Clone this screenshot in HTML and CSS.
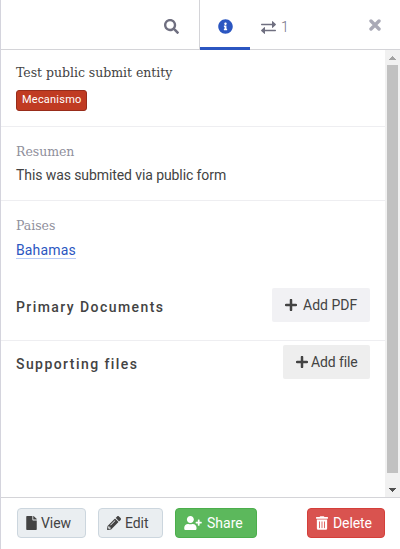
FILE: index.html
```html
<!DOCTYPE html>
<html lang="es">
<head>
<meta charset="utf-8">
<title>Entity</title>
<link rel="stylesheet" href="styles.css">
</head>
<body>
<aside class="panel">
  <header class="tabs">
    <div class="tab tab-search"><svg class="i15" viewBox="0 0 512 512"><path d="M505 442.700L405.300 343c-4.500-4.500-10.600-7-17-7H372c27.600-35.300 44-79.700 44-128C416 93.100 322.900 0 208 0S0 93.100 0 208s93.100 208 208 208c48.300 0 92.700-16.400 128-44v16.300c0 6.400 2.500 12.500 7 17l99.700 99.700c9.400 9.400 24.600 9.400 33.900 0l28.300-28.300c9.400-9.400 9.400-24.600.1-34zM208 336c-70.700 0-128-57.200-128-128 0-70.700 57.200-128 128-128 70.700 0 128 57.200 128 128 0 70.700-57.200 128-128 128z"/></svg></div>
    <div class="tab tab-info"><svg class="i15" viewBox="0 0 512 512"><path d="M256 8C119 8 8 119.100 8 256c0 137 111 248 248 248s248-111 248-248C504 119.100 393 8 256 8zm0 110c23.200 0 42 18.800 42 42s-18.800 42-42 42-42-18.800-42-42 18.800-42 42-42zm56 254c0 6.600-5.400 12-12 12h-88c-6.600 0-12-5.400-12-12v-24c0-6.600 5.400-12 12-12h12v-64h-12c-6.600 0-12-5.400-12-12v-24c0-6.600 5.400-12 12-12h64c6.600 0 12 5.400 12 12v100h12c6.600 0 12 5.400 12 12v24z"/></svg></div>
    <div class="tab tab-rel"><svg class="i15" viewBox="0 0 15 15"><path d="M.6 3.800H11V1.600q0-.8.7-.3l3 2.700q.5.500 0 1l-3 2.700q-.7.500-.7-.3V5.300H.6Q0 5.300 0 4.550T.6 3.800zM14.400 9.800H4V7.600q0-.8-.7-.3l-3 2.700q-.5.500 0 1l3 2.700q.7.500.7-.3v-2.100h10.400q.6 0 .6-.75t-.6-.75z"/></svg><span>1</span></div>
    <div class="close"><svg viewBox="0 0 12 12"><path d="M2 2l8 8M10 2L2 10"/></svg></div>
  </header>
  <div class="middle">
    <main class="content">
      <section class="block head">
        <h1>Test public submit entity</h1>
        <span class="badge">Mecanismo</span>
      </section>
      <dl class="block resumen"><dt>Resumen</dt><dd>This was submited via public form</dd></dl>
      <dl class="block paises"><dt>Paises</dt><dd><a>Bahamas</a></dd></dl>
      <section class="files primary"><h2>Primary Documents</h2>
        <button class="add pdf"><svg viewBox="0 0 12 12"><path d="M6 1v10M1 6h10"/></svg><span>Add PDF</span></button></section>
      <section class="files supporting"><h2>Supporting files</h2>
        <button class="add"><svg viewBox="0 0 12 12"><path d="M6 1v10M1 6h10"/></svg><span>Add file</span></button></section>
    </main>
    <div class="scroll">
      <svg class="arrow up" viewBox="0 0 7 4"><path d="M3 0h1v1h1v1h1v1h1v1H0V3h1V2h1V1h1z"/></svg>
      <div class="thumb"></div>
      <svg class="arrow down" viewBox="0 0 7 4"><path d="M0 0h7v1H6v1H5v1H4v1H3V3H2V2H1V1H0z"/></svg>
    </div>
  </div>
  <footer class="actions">
    <button class="btn view"><svg viewBox="0 0 384 512"><path d="M224 136V0H24C10.700 0 0 10.700 0 24v464c0 13.300 10.700 24 24 24h336c13.300 0 24-10.700 24-24V160H248c-13.200 0-24-10.800-24-24zm160-14.100v6.100H256V0h6.100c6.400 0 12.500 2.500 17 7l97.900 98c4.500 4.500 7 10.600 7 16.900z"/></svg><span>View</span></button>
    <button class="btn edit"><svg viewBox="0 0 512 512"><path d="M497.900 142.100l-46.100 46.100c-4.700 4.700-12.300 4.700-17 0l-111-111c-4.700-4.700-4.700-12.300 0-17l46.100-46.100c18.700-18.700 49.100-18.700 67.900 0l60.100 60.100c18.800 18.700 18.800 49.100 0 67.900zM284.200 99.800L21.600 362.400.4 483.900c-2.900 16.400 11.400 30.600 27.800 27.800l121.500-21.300 262.600-262.600c4.700-4.700 4.700-12.300 0-17l-111-111c-4.800-4.700-12.400-4.700-17.100 0zM124.100 339.900c-5.500-5.500-5.500-14.300 0-19.800l154-154c5.500-5.500 14.300-5.500 19.800 0s5.500 14.300 0 19.800l-154 154c-5.500 5.500-14.300 5.500-19.800 0zM88 424h48v36.300l-64.500 11.300-31.100-31.100L51.700 376H88v48z"/></svg><span>Edit</span></button>
    <button class="btn share"><svg viewBox="0 0 640 512"><path d="M624 208h-64v-64c0-8.800-7.200-16-16-16h-32c-8.800 0-16 7.200-16 16v64h-64c-8.800 0-16 7.200-16 16v32c0 8.800 7.200 16 16 16h64v64c0 8.800 7.200 16 16 16h32c8.800 0 16-7.200 16-16v-64h64c8.800 0 16-7.200 16-16v-32c0-8.800-7.200-16-16-16zM224 256c70.700 0 128-57.300 128-128S294.700 0 224 0 96 57.300 96 128s57.300 128 128 128zm89.600 32h-16.700c-22.200 10.200-46.900 16-72.900 16s-50.600-5.800-72.900-16h-16.700C60.200 288 0 348.200 0 422.400V464c0 26.500 21.500 48 48 48h352c26.500 0 48-21.500 48-48v-41.600c0-74.200-60.200-134.400-134.400-134.400z"/></svg><span>Share</span></button>
    <button class="btn delete"><svg viewBox="0 0 448 512"><path d="M32 464a48 48 0 0 0 48 48h288a48 48 0 0 0 48-48V128H32zm272-256a16 16 0 0 1 32 0v224a16 16 0 0 1-32 0zm-96 0a16 16 0 0 1 32 0v224a16 16 0 0 1-32 0zm-96 0a16 16 0 0 1 32 0v224a16 16 0 0 1-32 0zM432 32H312l-9.400-18.700A24 24 0 0 0 281.100 0H166.800a23.700 23.700 0 0 0-21.400 13.300L136 32H16A16 16 0 0 0 0 48v32a16 16 0 0 0 16 16h416a16 16 0 0 0 16-16V48a16 16 0 0 0-16-16z"/></svg><span>Delete</span></button>
  </footer>
</aside>
</body>
</html>
```
FILE: styles.css
```css
* { box-sizing: border-box; }
body { margin: 0; background: #fff; color: #434343; font: 14px/21px Roboto, sans-serif; }
h1, h2, dl, dt, dd { margin: 0; font-weight: 400; }
svg { display: block; fill: currentColor; flex: none; }
button { font: inherit; color: inherit; margin: 0; }
.panel { display: flex; flex-direction: column; height: 549px; border-left: 1px solid #d4d4dd; overflow: hidden; }

.tabs { display: flex; height: 50px; border-bottom: 1px solid #d4d4d8; color: #6f6f80; }
.tab { display: flex; align-items: center; height: 50px; padding-top: 3px; }
.i15 { width: 15px; height: 15px; }
.tab-search { width: 199px; padding-left: 163px; border-right: 1px solid #d4d4d8; }
.tab-info { width: 50px; justify-content: center; color: #2b56c1; border-bottom: 3px solid #2b56c1; padding-top: 6px; }
.tab-rel { padding-left: 11px; gap: 5px; padding-top: 4px; }
.tab-rel span { font-weight: 300; }
.close { margin: 19px 19px 0 auto; }
.close svg { width: 12px; height: 12px; fill: none; stroke: #a9a9b6; stroke-width: 3.4; stroke-linecap: round; }

.middle { display: flex; height: 447px; }
.content { flex: 1; }
.block { padding: 0 15px; }
.head { height: 77px; padding-top: 12px; border-bottom: 1px solid #eeeef1; }
h1, dt { font-family: "Roboto Slab", "DejaVu Serif", serif; font-size: 12.5px; line-height: 21px; letter-spacing: -.03px; }
.badge { display: block; width: 71px; height: 21px; margin-top: 7px; border: 1px solid #982c1a; border-radius: 3px; background: #c03b22; color: #fff; font-size: 11px; line-height: 18px; letter-spacing: .22px; padding-left: 5px; }
dt { color: #8f8f9c; font-weight: 300; }
.resumen { height: 74px; padding-top: 14px; border-bottom: 1px solid #eeeef1; }
.resumen dd { margin-top: 3px; letter-spacing: -.09px; }
.paises { height: 80px; padding-top: 14px; }
.paises dd { margin-top: 4px; }
.paises a { display: inline-block; height: 19px; line-height: 20px; color: #2b56c1; letter-spacing: .14px; border-bottom: 1px solid #b9ccf7; }
.files { display: flex; justify-content: space-between; padding: 0 15px; }
.primary { height: 60px; padding-top: 7px; border-bottom: 1px solid #eeeef1; }
.supporting { padding-top: 4px; }
h2 { font-size: 14px; font-weight: 500; line-height: 38px; letter-spacing: 1.43px; }
.add { display: flex; align-items: center; gap: 3px; width: 87px; height: 34px; padding: 0 0 0 13px; border: 0; border-radius: 2px; background: #eee; letter-spacing: -.12px; }
.add svg { width: 12px; height: 12px; fill: none; stroke: #434343; stroke-width: 2.5; stroke-linecap: round; }
.pdf { width: 98px; gap: 6px; background: #f1f1f4; letter-spacing: 0; }
.scroll { width: 15px; background: #f1f1f1; display: flex; flex-direction: column; align-items: center; }
.arrow { width: 7px; height: 4px; shape-rendering: crispEdges; }
.up { margin: 6px 0 5px; color: #a3a3a3; }
.thumb { width: 11px; height: 408px; background: #c1c1c1; }
.down { margin-top: 15px; color: #505050; }

.actions { display: flex; height: 52px; padding: 10px 15px 0 16px; border-top: 1px solid #d4d4d8; }
.btn { display: flex; align-items: center; height: 30px; padding: 0 0 0 8px; border: 1px solid #ccd6de; border-radius: 4px; background: #eaeef1; gap: 5px; letter-spacing: -.08px; }
.btn svg { height: 14px; }
.view { width: 69px; gap: 4px; }
.view svg { width: 11px; }
.edit { width: 65px; margin-left: 12px; gap: 4px; }
.edit svg { width: 14px; }
.share { width: 82px; margin-left: 12px; color: #fff; background: #5cb85c; border-color: #4cae4c; letter-spacing: 0; }
.share svg { width: 18px; }
.delete { width: 78px; margin-left: auto; color: #fff; background: #d9534f; border-color: #d43f3a; }
.delete svg { width: 12px; }
```
